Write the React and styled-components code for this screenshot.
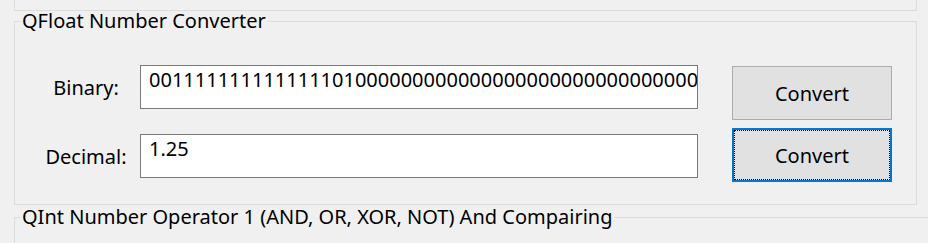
import React from 'react'
import styled, { createGlobalStyle, css } from "styled-components";

const GlobalStyle = createGlobalStyle`
    html, body {
        margin: 0;
        background: #f0f0f0;
        overflow: hidden;
    }
    body {
        font-family: "Noto Sans", "Open Sans", sans-serif;
        font-size: 20px;
        color: #000;
    }
`;

const Page = styled.div`
    width: 928px;
    height: 243px;
    overflow: hidden;
`;

// bottom edge of the group box scrolled above
const PrevGroup = styled.div`
    margin-left: 14px;
    width: 903px;
    height: 11px;
    box-sizing: border-box;
    border: 1px solid #dcdcdc;
    border-top: none;
`;

const Group = styled.fieldset`
    margin: ${p => p.$top || 0}px 0 0 14px;
    padding: 0;
    min-width: 0;
    width: ${p => p.$width}px;
    box-sizing: border-box;
    border: 1px solid #dcdcdc;
`;

const Legend = styled.legend`
    margin-left: 5px;
    padding: 0 2px;
    font-size: 20px;
    line-height: 20px;
    white-space: nowrap;
`;

const Body = styled.div`
    padding: 34px 0 22px 29px;
    min-height: ${p => p.$minHeight || 0}px;
`;

const Row = styled.div`
    display: flex;
    align-items: flex-start;
    & + & {
        margin-top: 8px;
    }
`;

const Label = styled.div`
    width: 84px;
    height: 44px;
    margin-right: 12px;
    margin-top: ${p => p.$top || 0}px;
    display: flex;
    align-items: center;
    justify-content: center;
    white-space: nowrap;
`;

const TextBox = styled.div`
    width: 558px;
    height: 44px;
    margin-top: ${p => p.$top || 0}px;
    box-sizing: border-box;
    border: 1px solid #7a7a7a;
    background: #fff;
    padding: 2px 0 0 8px;
    line-height: 24px;
    white-space: nowrap;
    overflow: hidden;
`;

const Button = styled.button`
    width: 160px;
    height: 54px;
    margin-left: 34px;
    margin-top: ${p => p.$top || 0}px;
    padding: 0;
    box-sizing: border-box;
    background: #e1e1e1;
    border: 1px solid #adadad;
    font: inherit;
    color: #000;
    ${p => p.$focused && css`
        border: 2px solid #0078d7;
        outline: 1px dotted #000;
        outline-offset: -3px;
    `}
`;

const binary = "00" + "1".repeat(14) + "01" + "0".repeat(110);

function App() {
    return (
        <Page>
            <GlobalStyle />
            <PrevGroup />
            <Group $width={903}>
                <Legend>QFloat Number Converter</Legend>
                <Body>
                    <Row>
                        <Label>Binary:</Label>
                        <TextBox>{binary}</TextBox>
                        <Button $top={1}>Convert</Button>
                    </Row>
                    <Row>
                        <Label $top={6}>Decimal:</Label>
                        <TextBox $top={6}>1.25</TextBox>
                        <Button $focused>Convert</Button>
                    </Row>
                </Body>
            </Group>
            <Group $width={940} $top={2}>
                <Legend>QInt Number Operator 1 (AND, OR, XOR, NOT) And Compairing</Legend>
                <Body $minHeight={60} />
            </Group>
        </Page>
    )
}

export default App
